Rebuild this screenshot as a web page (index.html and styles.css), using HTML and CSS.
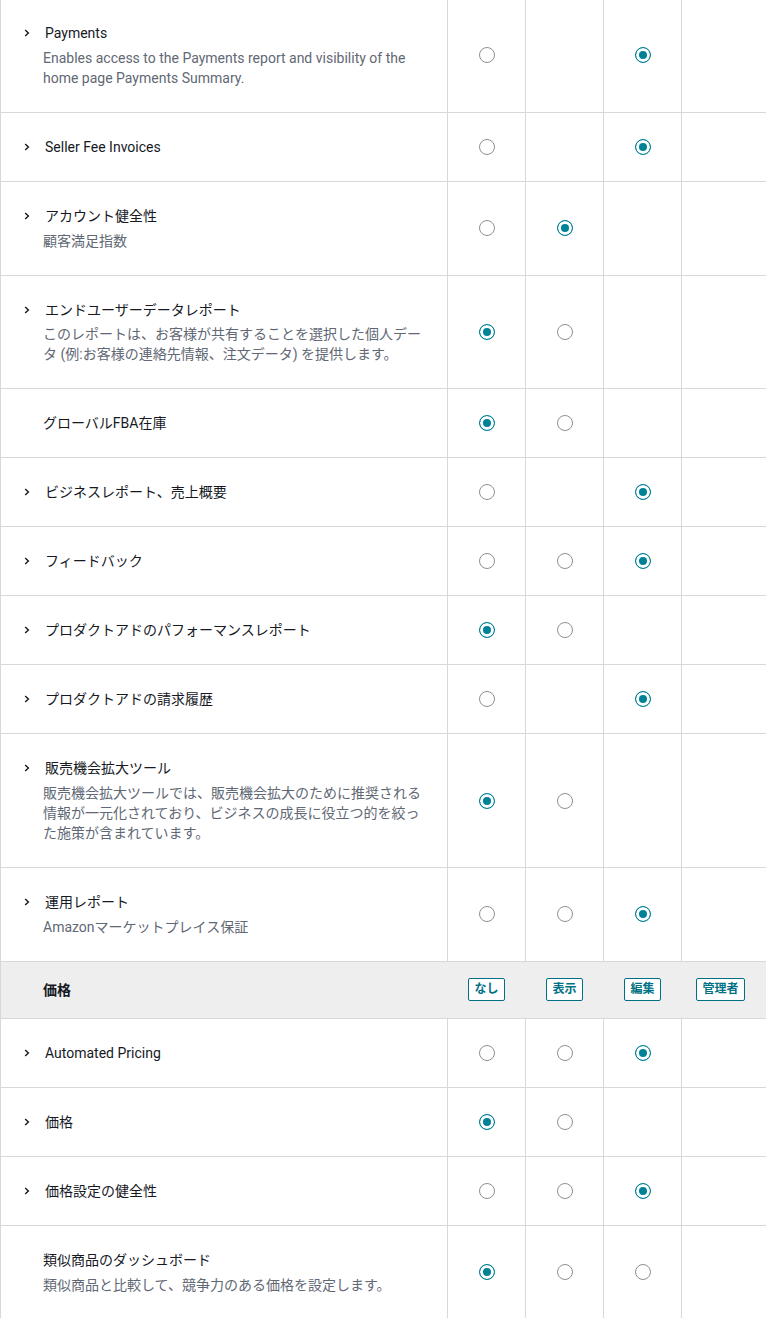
FILE: index.html
```html
<!DOCTYPE html>
<html lang="ja">
<head>
  <meta charset="UTF-8" />
  <meta name="viewport" content="width=device-width, initial-scale=1.0" />
  <title>ユーザー権限</title>
  <link rel="stylesheet" href="styles.css">
</head>
<body>
  <div class="perm-table">
    <div class="perm-row">
      <div class="cell name">
        <div class="title"><span class="chev"><svg width="6" height="8" viewBox="0 0 6 8"><path d="M1.2 1 L4.4 4 L1.2 7" /></svg></span>Payments</div>
        <div class="desc">Enables access to the Payments report and visibility of the home page Payments Summary.</div>
      </div>
      <div class="cell"><input type="radio" name="r1" /></div>
      <div class="cell"></div>
      <div class="cell"><input type="radio" name="r1" checked /></div>
      <div class="cell"></div>
    </div>

    <div class="perm-row">
      <div class="cell name">
        <div class="title"><span class="chev"><svg width="6" height="8" viewBox="0 0 6 8"><path d="M1.2 1 L4.4 4 L1.2 7" /></svg></span>Seller Fee Invoices</div>
      </div>
      <div class="cell"><input type="radio" name="r2" /></div>
      <div class="cell"></div>
      <div class="cell"><input type="radio" name="r2" checked /></div>
      <div class="cell"></div>
    </div>

    <div class="perm-row">
      <div class="cell name">
        <div class="title"><span class="chev"><svg width="6" height="8" viewBox="0 0 6 8"><path d="M1.2 1 L4.4 4 L1.2 7" /></svg></span>アカウント健全性</div>
        <div class="desc">顧客満足指数</div>
      </div>
      <div class="cell"><input type="radio" name="r3" /></div>
      <div class="cell"><input type="radio" name="r3" checked /></div>
      <div class="cell"></div>
      <div class="cell"></div>
    </div>

    <div class="perm-row">
      <div class="cell name">
        <div class="title"><span class="chev"><svg width="6" height="8" viewBox="0 0 6 8"><path d="M1.2 1 L4.4 4 L1.2 7" /></svg></span>エンドユーザーデータレポート</div>
        <div class="desc">このレポートは、お客様が共有することを選択した個人データ (例:お客様の連絡先情報、注文データ) を提供します。</div>
      </div>
      <div class="cell"><input type="radio" name="r4" checked /></div>
      <div class="cell"><input type="radio" name="r4" /></div>
      <div class="cell"></div>
      <div class="cell"></div>
    </div>

    <div class="perm-row">
      <div class="cell name">
        <div class="title">グローバルFBA在庫</div>
      </div>
      <div class="cell"><input type="radio" name="r5" checked /></div>
      <div class="cell"><input type="radio" name="r5" /></div>
      <div class="cell"></div>
      <div class="cell"></div>
    </div>

    <div class="perm-row">
      <div class="cell name">
        <div class="title"><span class="chev"><svg width="6" height="8" viewBox="0 0 6 8"><path d="M1.2 1 L4.4 4 L1.2 7" /></svg></span>ビジネスレポート、売上概要</div>
      </div>
      <div class="cell"><input type="radio" name="r6" /></div>
      <div class="cell"></div>
      <div class="cell"><input type="radio" name="r6" checked /></div>
      <div class="cell"></div>
    </div>

    <div class="perm-row">
      <div class="cell name">
        <div class="title"><span class="chev"><svg width="6" height="8" viewBox="0 0 6 8"><path d="M1.2 1 L4.4 4 L1.2 7" /></svg></span>フィードバック</div>
      </div>
      <div class="cell"><input type="radio" name="r7" /></div>
      <div class="cell"><input type="radio" name="r7" /></div>
      <div class="cell"><input type="radio" name="r7" checked /></div>
      <div class="cell"></div>
    </div>

    <div class="perm-row">
      <div class="cell name">
        <div class="title"><span class="chev"><svg width="6" height="8" viewBox="0 0 6 8"><path d="M1.2 1 L4.4 4 L1.2 7" /></svg></span>プロダクトアドのパフォーマンスレポート</div>
      </div>
      <div class="cell"><input type="radio" name="r8" checked /></div>
      <div class="cell"><input type="radio" name="r8" /></div>
      <div class="cell"></div>
      <div class="cell"></div>
    </div>

    <div class="perm-row">
      <div class="cell name">
        <div class="title"><span class="chev"><svg width="6" height="8" viewBox="0 0 6 8"><path d="M1.2 1 L4.4 4 L1.2 7" /></svg></span>プロダクトアドの請求履歴</div>
      </div>
      <div class="cell"><input type="radio" name="r9" /></div>
      <div class="cell"></div>
      <div class="cell"><input type="radio" name="r9" checked /></div>
      <div class="cell"></div>
    </div>

    <div class="perm-row">
      <div class="cell name">
        <div class="title"><span class="chev"><svg width="6" height="8" viewBox="0 0 6 8"><path d="M1.2 1 L4.4 4 L1.2 7" /></svg></span>販売機会拡大ツール</div>
        <div class="desc">販売機会拡大ツールでは、販売機会拡大のために推奨される情報が一元化されており、ビジネスの成長に役立つ的を絞った施策が含まれています。</div>
      </div>
      <div class="cell"><input type="radio" name="r10" checked /></div>
      <div class="cell"><input type="radio" name="r10" /></div>
      <div class="cell"></div>
      <div class="cell"></div>
    </div>

    <div class="perm-row">
      <div class="cell name">
        <div class="title"><span class="chev"><svg width="6" height="8" viewBox="0 0 6 8"><path d="M1.2 1 L4.4 4 L1.2 7" /></svg></span>運用レポート</div>
        <div class="desc">Amazonマーケットプレイス保証</div>
      </div>
      <div class="cell"><input type="radio" name="r11" /></div>
      <div class="cell"><input type="radio" name="r11" /></div>
      <div class="cell"><input type="radio" name="r11" checked /></div>
      <div class="cell"></div>
    </div>

    <div class="perm-row group-head">
      <div class="cell name"><div class="group-title">価格</div></div>
      <div class="cell"><button class="level-btn">なし</button></div>
      <div class="cell"><button class="level-btn">表示</button></div>
      <div class="cell"><button class="level-btn">編集</button></div>
      <div class="cell"><button class="level-btn">管理者</button></div>
    </div>

    <div class="perm-row">
      <div class="cell name">
        <div class="title"><span class="chev"><svg width="6" height="8" viewBox="0 0 6 8"><path d="M1.2 1 L4.4 4 L1.2 7" /></svg></span>Automated Pricing</div>
      </div>
      <div class="cell"><input type="radio" name="r12" /></div>
      <div class="cell"><input type="radio" name="r12" /></div>
      <div class="cell"><input type="radio" name="r12" checked /></div>
      <div class="cell"></div>
    </div>

    <div class="perm-row">
      <div class="cell name">
        <div class="title"><span class="chev"><svg width="6" height="8" viewBox="0 0 6 8"><path d="M1.2 1 L4.4 4 L1.2 7" /></svg></span>価格</div>
      </div>
      <div class="cell"><input type="radio" name="r13" checked /></div>
      <div class="cell"><input type="radio" name="r13" /></div>
      <div class="cell"></div>
      <div class="cell"></div>
    </div>

    <div class="perm-row">
      <div class="cell name">
        <div class="title"><span class="chev"><svg width="6" height="8" viewBox="0 0 6 8"><path d="M1.2 1 L4.4 4 L1.2 7" /></svg></span>価格設定の健全性</div>
      </div>
      <div class="cell"><input type="radio" name="r14" /></div>
      <div class="cell"><input type="radio" name="r14" /></div>
      <div class="cell"><input type="radio" name="r14" checked /></div>
      <div class="cell"></div>
    </div>

    <div class="perm-row">
      <div class="cell name">
        <div class="title">類似商品のダッシュボード</div>
        <div class="desc">類似商品と比較して、競争力のある価格を設定します。</div>
      </div>
      <div class="cell"><input type="radio" name="r15" checked /></div>
      <div class="cell"><input type="radio" name="r15" /></div>
      <div class="cell"><input type="radio" name="r15" /></div>
      <div class="cell"></div>
    </div>
  </div>
</body>
</html>
```

FILE: styles.css
```css
body {
  margin: 0;
  font-family: Roboto, 'Noto Sans CJK JP', sans-serif;
  font-size: 14px;
  color: #0f1111;
  background: #fff;
}
.perm-table {
  margin-top: -1px;
}
.perm-row {
  display: grid;
  grid-template-columns: 447px repeat(4, 78px);
  border-bottom: 1px solid #d5d9d9;
}
.cell {
  border-left: 1px solid #d5d9d9;
  display: flex;
  align-items: center;
  justify-content: center;
}
.cell.name {
  display: block;
  padding: 24px 23px 24px 42px;
}
.title {
  display: flex;
  align-items: center;
  line-height: 20px;
  color: #16191f;
}
.chev {
  width: 21px;
  margin-left: -19px;
  display: flex;
  align-items: center;
}
.chev path {
  fill: none;
  stroke: #16191f;
  stroke-width: 1.4;
}
.desc {
  margin-top: 4.75px;
  line-height: 20px;
  color: #5f6874;
}
input[type="radio"] {
  appearance: none;
  -webkit-appearance: none;
  margin: 0;
  width: 16px;
  height: 16px;
  border: 1px solid #8d9096;
  border-radius: 50%;
  background: #fff;
}
input[type="radio"]:checked {
  border-color: #008296;
  background: #008296;
  box-shadow: inset 0 0 0 3px #fff;
}
.group-head {
  background: #eeeeee;
}
.group-head .cell {
  border-left-color: transparent;
}
.group-head .cell.name {
  border-left-color: #d5d9d9;
  padding-top: 18px;
  padding-bottom: 18px;
}
.group-title {
  font-weight: 700;
  line-height: 20px;
  color: #16191f;
}
.level-btn {
  font-family: inherit;
  font-size: 12px;
  font-weight: 700;
  line-height: 21px;
  padding: 0 5px;
  color: #007185;
  background: #fff;
  border: 1px solid #007185;
  border-radius: 2px;
}
```
